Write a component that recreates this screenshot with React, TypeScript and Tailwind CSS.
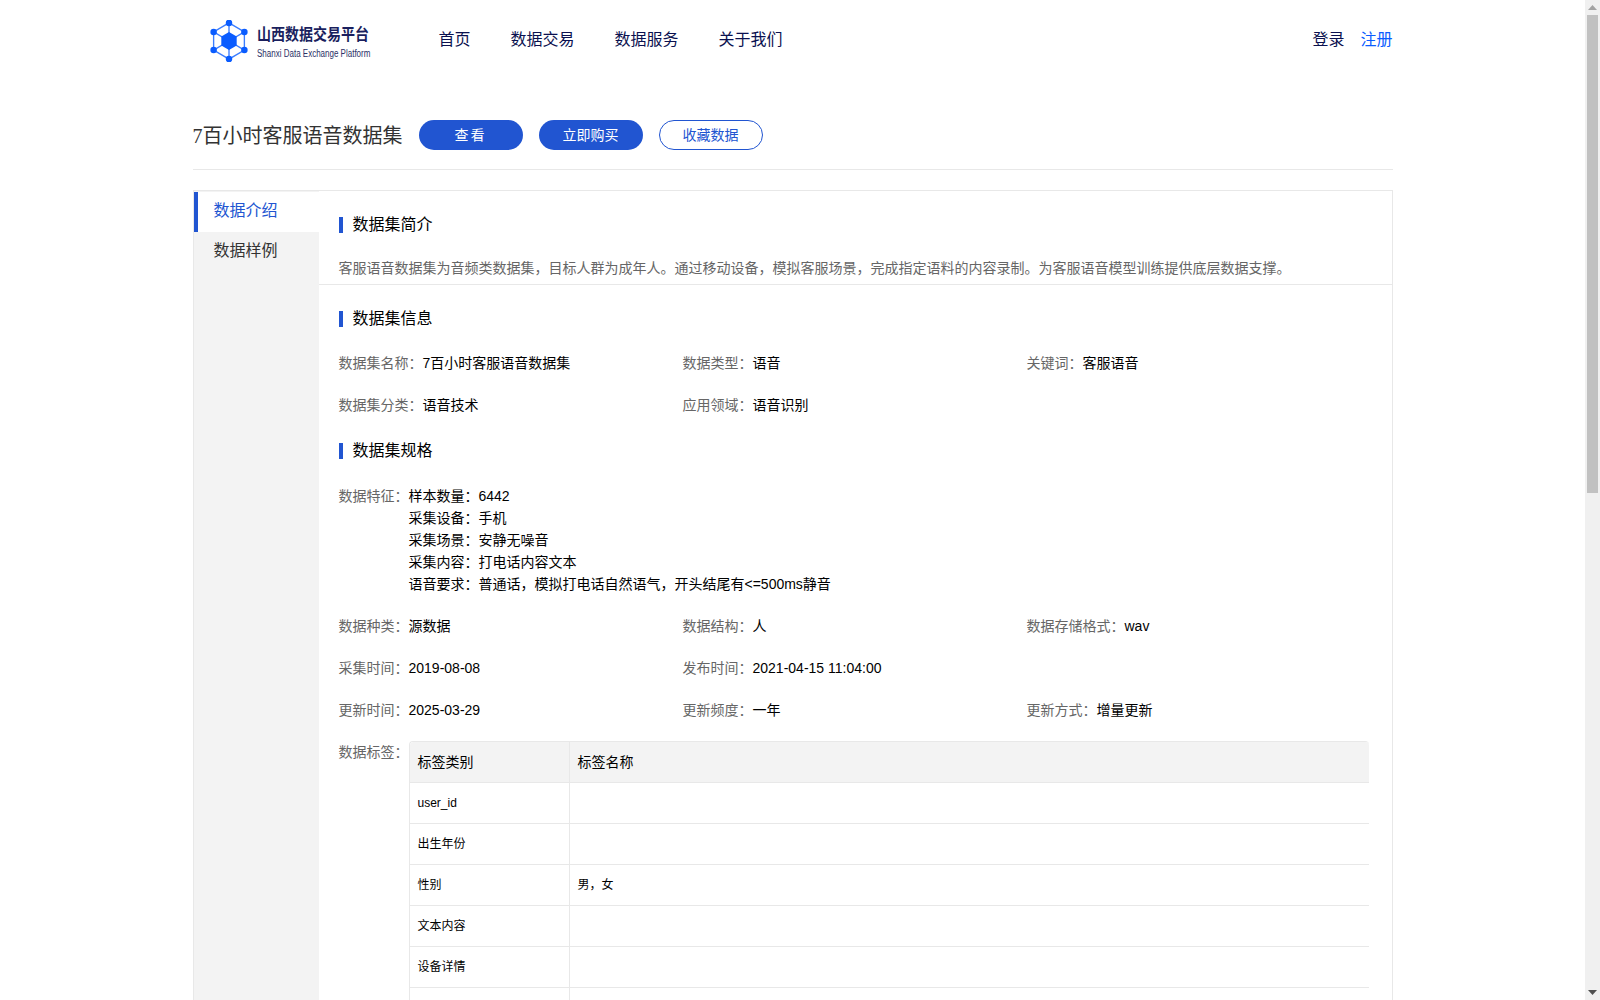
const Sans = '"Liberation Sans", "Noto Sans CJK SC", sans-serif';
const C = '\uFF1A';
const K = '\uFF0C';

function Logo() {
  const pts = [[24, 4], [41, 14], [41, 34], [24, 44], [7, 34], [7, 14]];
  return (
    <svg width="38" height="42" viewBox="3 1 42 46" className="shrink-0">
      <polygon points="24,4 41,14 41,34 24,44 7,34 7,14" fill="none" stroke="#3b7dff" strokeWidth="1.5" />
      {pts.map(([x, y], i) => (
        <g key={i}>
          <line x1="24" y1="24" x2={x} y2={y} stroke="#3b7dff" strokeWidth="1.5" />
          <circle cx={x} cy={y} r="3.6" fill="#0a5cff" />
        </g>
      ))}
      <polygon points="24,14 32.5,19 32.5,29 24,34 15.5,29 15.5,19" fill="#0a5cff" />
    </svg>
  );
}

function Heading({ children }: { children: string }) {
  return (
    <div className="flex items-center h-6 text-base text-black">
      <span className="w-1 h-4 bg-[#2155d1] mr-2.5" />
      {children}
    </div>
  );
}

function Field({ label, value }: { label: string; value: string }) {
  return (
    <div className="h-[42px] flex text-sm leading-[22px]">
      <span className="text-[#666666]">{label}{C}</span>
      <span className="text-black">{value}</span>
    </div>
  );
}

const rows = [
  ['user_id', ''],
  ['出生年份', ''],
  ['性别', `男${K}女`],
  ['文本内容', ''],
  ['设备详情', ''],
  ['', ''],
];

function Scrollbar() {
  return (
    <div className="w-[15px] h-screen shrink-0 bg-[#f0f0f0] flex flex-col items-center">
      <svg width="9" height="15" viewBox="0 0 9 15" className="shrink-0">
        <polygon points="4.5,5 9,10 0,10" fill="#a3a3a3" />
      </svg>
      <div className="w-[11px] h-[478px] bg-[#c1c1c1]" />
      <svg width="9" height="15" viewBox="0 0 9 15" className="mt-auto shrink-0">
        <polygon points="0,5 9,5 4.5,10" fill="#505050" />
      </svg>
    </div>
  );
}

export default function App() {
  return (
    <div className="h-screen flex overflow-hidden bg-white" style={{ fontFamily: Sans }}>
      <div className="flex-1 min-w-0 overflow-hidden">
        <div className="w-[1200px] mx-auto pb-10">
          <header className="h-[78px] flex items-center text-base text-[#0b1150]">
            <div className="w-[246px] pl-[17px] flex items-center gap-[9px] pt-1">
              <Logo />
              <div className="flex flex-col pt-1 w-[114px]">
                <span className="text-base font-bold leading-5 text-[#1a1f5e] whitespace-nowrap origin-left scale-x-[0.875]">山西数据交易平台</span>
                <span className="text-[10px] leading-[14px] mt-[2px] text-[#2b3066] whitespace-nowrap origin-left scale-x-[0.8]">Shanxi Data Exchange Platform</span>
              </div>
            </div>
            <nav className="flex gap-10 pt-px">
              <span>首页</span>
              <span>数据交易</span>
              <span>数据服务</span>
              <span>关于我们</span>
            </nav>
            <div className="ml-auto flex gap-4 pt-px">
              <span>登录</span>
              <span className="text-[#0a5cff]">注册</span>
            </div>
          </header>

          <div className="h-[92px] pt-[42px] border-b border-[#e8e8e8] flex items-start">
            <h1 className="text-xl leading-[30px] pt-px text-[#333333] mr-4 font-normal" style={{ fontFamily: '"Liberation Serif", "Noto Sans CJK SC", serif' }}>
              7百小时客服语音数据集
            </h1>
            <div className="flex gap-4 text-sm">
              <button className="w-[104px] h-[30px] rounded-full bg-[#2155d1] text-white tracking-[2px]">查看</button>
              <button className="w-[104px] h-[30px] rounded-full bg-[#2155d1] text-white">立即购买</button>
              <button className="w-[104px] h-[30px] rounded-full border border-[#2155d1] text-[#2155d1]">收藏数据</button>
            </div>
          </div>

          <div className="mt-5 border border-[#e8e8e8] flex min-h-[1799px]">
            <aside className="w-[125px] shrink-0 bg-[#f3f3f3] text-base pt-px">
              <div className="h-10 bg-white border-l-4 border-[#2155d1] pl-4 leading-[38px] text-[#2155d1]">数据介绍</div>
              <div className="h-10 pl-5 leading-[38px] text-[#333333]">数据样例</div>
            </aside>
            <main className="flex-1 min-w-0">
              <section className="h-[94px] border-b border-[#e8e8e8] pt-[22px] pl-5">
                <Heading>数据集简介</Heading>
                <p className="mt-5 text-sm leading-[22px] text-[#666666]">
                  {`客服语音数据集为音频类数据集${K}目标人群为成年人。通过移动设备${K}模拟客服场景${K}完成指定语料的内容录制。为客服语音模型训练提供底层数据支撑。`}
                </p>
              </section>
              <section className="pt-[22px] pl-5 pr-[23px]">
                <Heading>数据集信息</Heading>
                <div className="mt-[21px] grid grid-cols-[344px_344px_1fr]">
                  <Field label="数据集名称" value="7百小时客服语音数据集" />
                  <Field label="数据类型" value="语音" />
                  <Field label="关键词" value="客服语音" />
                  <Field label="数据集分类" value="语音技术" />
                  <Field label="应用领域" value="语音识别" />
                </div>
                <div className="mt-[3px]">
                  <Heading>数据集规格</Heading>
                </div>
                <div className="mt-[22px] flex text-sm leading-[22px] mb-5">
                  <span className="text-[#666666] w-[70px] shrink-0">{`数据特征${C}`}</span>
                  <div className="text-black">
                    <div>{`样本数量${C}6442`}</div>
                    <div>{`采集设备${C}手机`}</div>
                    <div>{`采集场景${C}安静无噪音`}</div>
                    <div>{`采集内容${C}打电话内容文本`}</div>
                    <div>{`语音要求${C}普通话${K}模拟打电话自然语气${K}开头结尾有<=500ms静音`}</div>
                  </div>
                </div>
                <div className="grid grid-cols-[344px_344px_1fr]">
                  <Field label="数据种类" value="源数据" />
                  <Field label="数据结构" value="人" />
                  <Field label="数据存储格式" value="wav" />
                  <Field label="采集时间" value="2019-08-08" />
                  <Field label="发布时间" value="2021-04-15 11:04:00" />
                  <div />
                  <Field label="更新时间" value="2025-03-29" />
                  <Field label="更新频度" value="一年" />
                  <Field label="更新方式" value="增量更新" />
                </div>
                <div className="flex text-sm leading-[22px]">
                  <span className="text-[#666666] w-[70px] shrink-0">{`数据标签${C}`}</span>
                  <table className="flex-1 border-separate border-spacing-0 rounded border-t border-l border-[#e8e8e8] text-black">
                    <thead>
                      <tr className="bg-[#f3f3f3] h-[41px] text-left">
                        <th className="w-[160px] px-2 font-normal border-b border-r border-[#e8e8e8] rounded-tl">标签类别</th>
                        <th className="px-2 font-normal border-b border-[#e8e8e8] rounded-tr">标签名称</th>
                      </tr>
                    </thead>
                    <tbody className="text-xs">
                      {rows.map(([a, b], i) => (
                        <tr key={i} className="h-[41px]">
                          <td className="px-2 border-b border-r border-[#e8e8e8]">{a}</td>
                          <td className="px-2 border-b border-[#e8e8e8]">{b}</td>
                        </tr>
                      ))}
                    </tbody>
                  </table>
                </div>
              </section>
            </main>
          </div>
        </div>
      </div>
      <Scrollbar />
    </div>
  );
}
